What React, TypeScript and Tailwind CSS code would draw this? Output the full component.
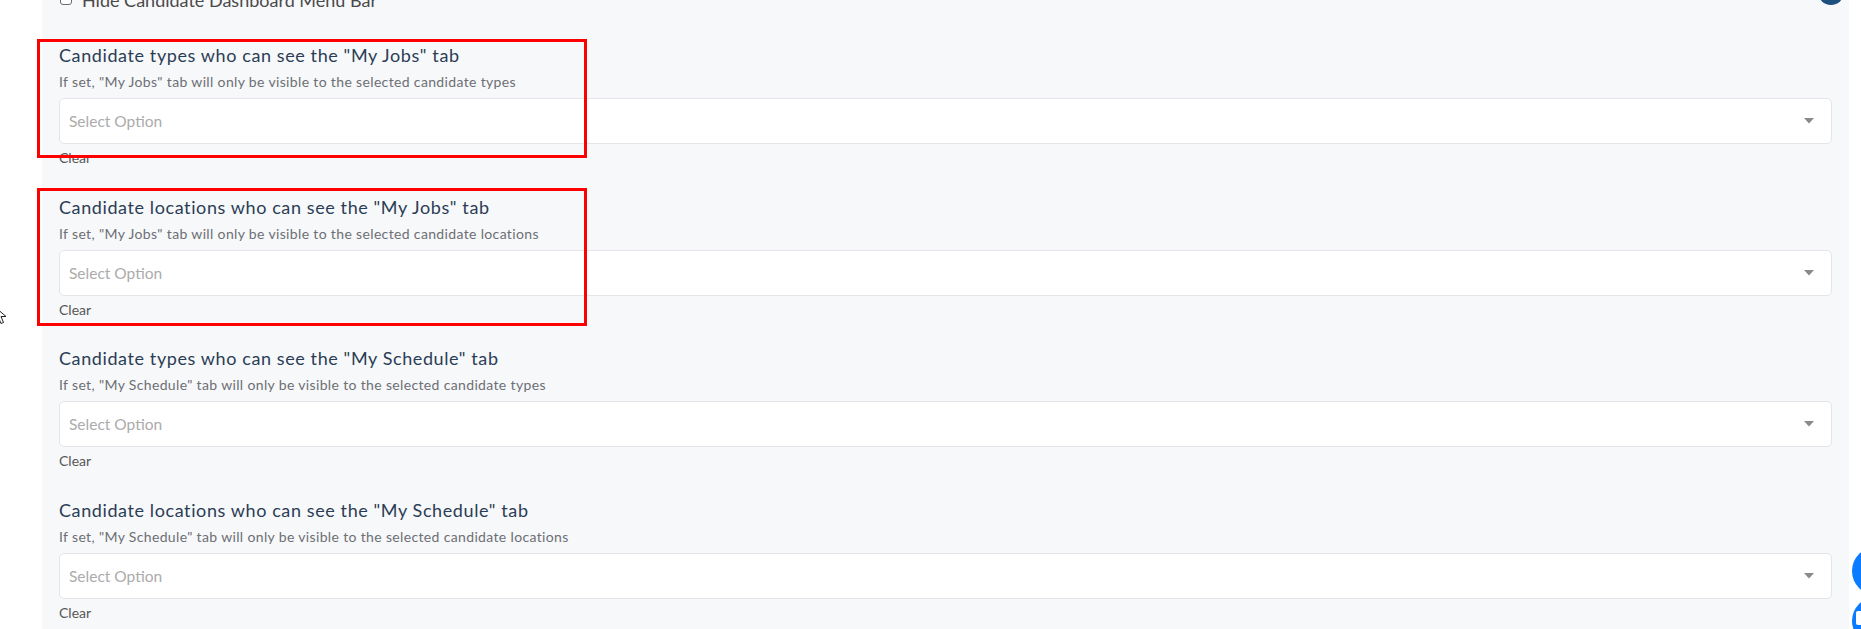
import React from 'react'

interface SectionProps {
  title: string
  hint: string
  marked?: 'first' | 'second'
}

const font = { fontFamily: 'Lato, "Noto Sans", sans-serif' }

function CaretDown() {
  return (
    <svg width="10" height="6" viewBox="0 0 10 6" className="block">
      <path d="M0 0 L10 0 L5 5.5 Z" fill="#8a8a8a" />
    </svg>
  )
}

function VisibilitySection({ title, hint, marked }: SectionProps) {
  return (
    <div className="relative mb-[26.5px]">
      {marked === 'first' && (
        <div className="pointer-events-none absolute left-[-22px] top-[-4px] z-10 h-[119px] w-[550px] border-[3px] border-[#ff0000]" />
      )}
      {marked === 'second' && (
        <div className="pointer-events-none absolute left-[-22px] top-[-6.5px] z-10 h-[138px] w-[550px] border-[3px] border-[#ff0000]" />
      )}
      <h3 className="h-[24px] text-[18px] leading-[24px] font-normal tracking-[0.6px] text-[#2b3d55]">{title}</h3>
      <p className="mt-[5px] h-[20px] text-[14px] leading-[20px] tracking-[0.35px] text-[#6c6f75]">{hint}</p>
      <div className="mt-[6px] flex h-[46px] items-center justify-between rounded-[5px] border border-[#e3e5e8] bg-white pl-[9px] pr-[17px]">
        <span className="text-[15.5px] leading-[18px] text-[#ababab]">Select Option</span>
        <CaretDown />
      </div>
      <button className="mt-[4px] block h-[20px] text-[14px] leading-[20px] text-[#565656]">Clear</button>
    </div>
  )
}

const sections: SectionProps[] = [
  {
    title: 'Candidate types who can see the "My Jobs" tab',
    hint: 'If set, "My Jobs" tab will only be visible to the selected candidate types',
    marked: 'first',
  },
  {
    title: 'Candidate locations who can see the "My Jobs" tab',
    hint: 'If set, "My Jobs" tab will only be visible to the selected candidate locations',
    marked: 'second',
  },
  {
    title: 'Candidate types who can see the "My Schedule" tab',
    hint: 'If set, "My Schedule" tab will only be visible to the selected candidate types',
  },
  {
    title: 'Candidate locations who can see the "My Schedule" tab',
    hint: 'If set, "My Schedule" tab will only be visible to the selected candidate locations',
  },
]

export default function App() {
  return (
    <div className="relative flex h-[629px] w-full overflow-hidden bg-white" style={font}>
      {/* cursor left over from the capture */}
      <svg className="absolute left-[-6px] top-[306px]" width="14" height="20" viewBox="0 0 14 20">
        <path d="M1 1 L1 15 L4.5 11.5 L7 17.5 L9.5 16.5 L7 10.5 L12 10.5 Z" fill="white" stroke="#222" strokeWidth="1" />
      </svg>

      <div className="w-[42px] shrink-0" />

      <div className="w-[1807px] shrink-0 bg-[#f7f8fa] pl-[17px] pr-[17px]">
        <label className="-mt-[12px] flex h-[24px] items-center gap-[10px] pl-[1px] text-[18px] leading-[24px] text-[#4a4a4a]">
          <span className="mt-[-3px] inline-block h-[13px] w-[12px] rounded-[3px] border border-[#6b6b6b] bg-white" />
          <span>Hide Candidate Dashboard Menu Bar</span>
        </label>

        <div className="mt-[31px]">
          {sections.map((s, i) => (
            <VisibilitySection key={i} {...s} />
          ))}
        </div>
      </div>

      <div className="flex-1" />

      {/* floating widgets at the window edge */}
      <div className="absolute left-[1818px] top-[-21px] h-[26px] w-[26px] rounded-full bg-[#1d4f7f]" />
      <div className="absolute left-[1852px] top-[547px] h-[48px] w-[48px] rounded-full bg-[#0b7bff]" />
      <div className="absolute left-[1852px] top-[597px] flex h-[48px] w-[48px] items-center rounded-full bg-[#0b7bff] pl-[4px]">
        <span className="mt-[-6px] inline-block h-[14px] w-[12px] rounded-[2px] bg-white" />
      </div>
    </div>
  )
}
